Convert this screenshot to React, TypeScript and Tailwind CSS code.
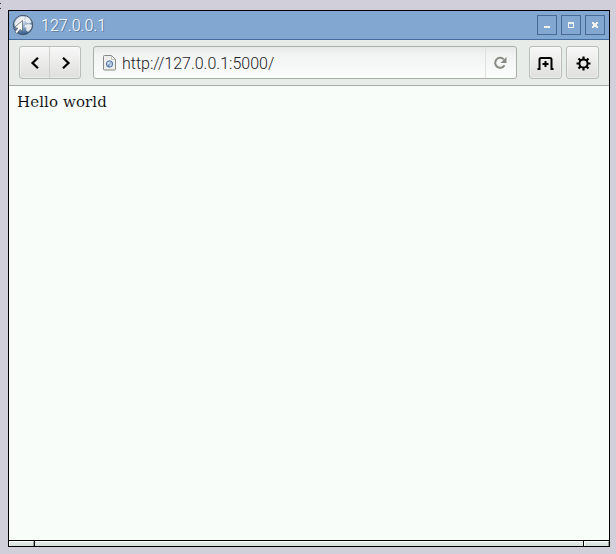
import React from "react";

const buttonFace =
  "border border-[#b9bdb9] bg-linear-to-b from-[#f7f8f7] to-[#dfdfdd] shadow-[inset_0_0_0_1px_rgba(255,255,255,0.35)]";

function Globe() {
  return (
    <svg width="22" height="22" viewBox="0 0 22 22">
      <defs>
        <radialGradient id="globe" cx="0.45" cy="0.25" r="0.8">
          <stop offset="0" stopColor="#dce6f0" />
          <stop offset="0.5" stopColor="#8aa5c6" />
          <stop offset="1" stopColor="#1d4a80" />
        </radialGradient>
      </defs>
      <circle cx="11" cy="11" r="9.7" fill="url(#globe)" stroke="#465668" />
      <path d="M2.500 9l2.500-4 4-2.500 4 .5-1 2 1 2-3 2-3 1-1 3-3-1zM14 2.500l3 1.500 2.500 4-2.500 1.500-3-1.500-1-2zM13 11l4-1 3 1-1 4-3 3-2-2 .5-2-2-1z" fill="#eef0ee" opacity="0.92" />
      <path d="M10.500 6.500v11l-2.500-2-3.200 4-2-1.500 3-3.800-3.500-.7z" fill="#f8f8f4" stroke="#465668" strokeWidth="0.700" />
    </svg>
  );
}

function PageIcon() {
  return (
    <svg width="14" height="16" viewBox="0 0 14 16">
      <path d="M2.500 .5h7l4 4v9.500q0 1-1 1h-10q-1 0-1-1v-12.500q0-1 1-1z" fill="#eeefec" stroke="#858883" />
      <path d="M9.500 1v3.500h3.500" fill="#fff" stroke="#c2c4c0" />
      <circle cx="7.500" cy="9" r="3.200" fill="#a9c0dc" stroke="#5579a8" />
      <path d="M5.500 7.500l2-.5v2l2 1-2 1.500z" fill="#e8eef5" />
      <path d="M7.500 8v4l-1.500-1z" fill="#456a9b" />
    </svg>
  );
}

function TitleButton({ children }: { children: React.ReactNode }) {
  return (
    <button className="size-5 border border-[#476a99]">
      <svg width="18" height="18" viewBox="0 0 18 18" shapeRendering="crispEdges" className="block">
        {children}
      </svg>
    </button>
  );
}

export default function App() {
  return (
    <div className="relative h-[554px] w-[616px] overflow-hidden bg-[#d0cfda] pl-2 pt-2.5 font-[Roboto,sans-serif]">
      <div className="absolute left-0 top-[3px] h-[1px] w-[1px] bg-[#333]" />
      <div className="absolute left-0 top-[8px] h-[1px] w-[1px] bg-[#333]" />
      <div className="flex h-[537px] w-[602px] flex-col border border-black bg-[#f8fdf9]">
        <header className="flex h-[29px] shrink-0 items-center border-b border-[#456d9e] bg-[#82a7d1] pl-[3px] pr-1">
          <Globe />
          <span className="ml-[7px] flex-1 pt-0.5 text-[16px] font-light leading-none tracking-[0.05px] text-white [text-shadow:1px_1px_0_#607da3]">
            127.0.0.1
          </span>
          <div className="flex gap-1">
            <TitleButton>
              <path d="M6 10h6v2h-6z" fill="#f0f0ec" />
            </TitleButton>
            <TitleButton>
              <path d="M6 6h6v6h-6zM7 8v3h4v-3z" fill="#f0f0ec" fillRule="evenodd" />
            </TitleButton>
            <TitleButton>
              <path d="M6 6h2v1h2v-1h2v2h-1v2h1v2h-2v-1h-2v1h-2v-2h1v-2h-1z" fill="#f0f0ec" />
            </TitleButton>
          </div>
        </header>

        <nav className="flex h-[46px] shrink-0 border-b border-[#a4aaa6] bg-[#e7ece8] pl-2.5 pt-1.5">
          <div className={`flex h-[33px] w-[62px] rounded-[3px] ${buttonFace}`}>
            <button className="flex w-[30px] items-center justify-center border-r border-[#cfd1ce]">
              <svg width="10" height="12" viewBox="0 0 10 12" className="ml-px">
                <path d="M8 .8L2.500 6l5.500 5.200" fill="none" stroke="#000" strokeWidth="2.200" />
              </svg>
            </button>
            <button className="flex w-[30px] items-center justify-center">
              <svg width="10" height="12" viewBox="0 0 10 12" className="ml-0.5">
                <path d="M2 .8l5.500 5.200-5.500 5.200" fill="none" stroke="#000" strokeWidth="2.200" />
              </svg>
            </button>
          </div>

          <div className="ml-3 flex h-[33px] w-[424px] rounded-[3px] border border-[#a9b0aa] bg-linear-to-b from-[#e6e9e7] via-[#f1f4f2] via-25% to-[#fafdfb]">
            <div className="flex flex-1 items-center pl-2">
              <PageIcon />
              <span className="ml-[6px] pt-[3px] text-[16px] font-light leading-none text-[#1e211f]">http://127.0.0.1:5000/</span>
            </div>
            <button className="flex w-[31px] items-center justify-center border-l border-[#dde1de]">
              <svg width="14" height="14" viewBox="0 0 14 14" className="-ml-0.5">
                <path d="M10.800 3.400A5 5 0 1 0 11.500 9.300" fill="none" stroke="#898a82" strokeWidth="2" />
                <path d="M13.500 1v6h-6z" fill="#898a82" />
              </svg>
            </button>
          </div>

          <button className={`ml-3 flex size-[33px] items-center justify-center rounded-[3px] ${buttonFace}`}>
            <svg width="17" height="13" viewBox="0 0 17 13" className="mt-px">
              <path d="M.5 12H2.500V2.500Q2.500 1 4 1H13Q14.500 1 14.500 2.500V12H16.500" fill="none" stroke="#000" strokeWidth="2" />
              <path d="M8.500 4v6M5.500 7h6" stroke="#000" strokeWidth="2" />
            </svg>
          </button>
          <button className={`ml-1 flex size-[33px] items-center justify-center rounded-[3px] ${buttonFace}`}>
            <svg width="15" height="15" viewBox="0 0 15 15" className="mt-px ml-px">
              <circle cx="7.500" cy="7.500" r="4.100" fill="none" stroke="#000" strokeWidth="2" />
              <path d="M7.500 .5v3M7.500 11.500v3M.5 7.500h3M11.500 7.500h3M2.500 2.500l2 2M10.500 10.500l2 2M2.500 12.500l2-2M10.500 4.500l2-2" stroke="#000" strokeWidth="2.200" />
            </svg>
          </button>
        </nav>

        <main className="flex-1 pl-2 pt-[7px]">
          <p className="text-[15px] leading-[18px] tracking-[0.1px] text-black [-webkit-text-stroke:0.12px_#f8fdf9] font-['DejaVu_Serif',serif]">
            Hello world
          </p>
        </main>

        <footer className="flex h-[6px] shrink-0 border-t border-black">
          <div className="w-[25px] border-l border-t border-r border-l-white border-t-white border-r-[#8e9a98] bg-linear-to-b from-[#e4ebe8] to-[#d3dfdd]" />
          <div className="w-px bg-black" />
          <div className="flex-1 border-t border-white bg-linear-to-b from-[#e4ebe8] to-[#d3dfdd]" />
          <div className="w-px bg-black" />
          <div className="w-[25px] border-l border-t border-r border-l-white border-t-white border-r-[#8e9a98] bg-linear-to-b from-[#e4ebe8] to-[#d3dfdd]" />
        </footer>
      </div>
    </div>
  );
}
